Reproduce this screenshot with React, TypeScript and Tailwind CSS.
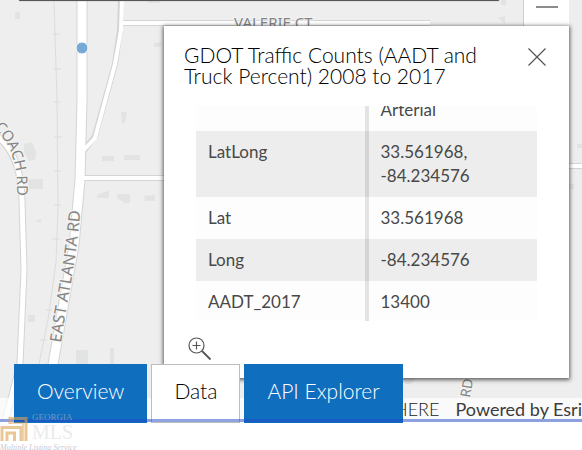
import { useState } from "react"

interface Field {
  name: string
  value: string
}

const fields: Field[] = [
  { name: "", value: "Arterial" },
  { name: "LatLong", value: "33.561968, -84.234576" },
  { name: "Lat", value: "33.561968" },
  { name: "Long", value: "-84.234576" },
  { name: "AADT_2017", value: "13400" },
]

const tabs = ["Overview", "Data", "API Explorer"]

function BaseMap() {
  return (
    <svg
      className="block h-full w-full"
      viewBox="0 0 582 422"
      preserveAspectRatio="xMinYMin slice"
      aria-label="Map"
    >
      <defs>
        <path id="coach" d="M-24 114 C-4 124 11 145 15 166 C17 176 17 186 17 196" />
        <path id="atlanta" d="M61 343 C67 300 78 256 82 190" />
      </defs>
      <rect width="900" height="600" fill="#eeeeee" />

      {/* buildings */}
      <g fill="#e2e3e3">
        <path d="M15 13l5-2v8h-5z" />
        <path d="M24 144l8-2 4 10-1 8-6 1-5-9z" />
        <path d="M28 179h15v10h-15z" />
        <path d="M35 221l6-2v4z" />
        <path d="M28 315h7v7h-7z" />
        <path d="M102 156h12v5h-12zM124 155h16v5h-16z" />
        <path d="M97 195l12-5v8h-12zM117 194h13v9h-5l-8-5zM144 196l11-1v6h-10z" />
        <path d="M121 112h6l-2 11h-3z" />
        <path d="M154 43l7-1v5h-7z" />
        <path d="M76 350h12v14h-12zM110 348h4v16h-4z" />
        <path d="M148 0h12v3h-12zM498 18l7-2v8zM500 0h6v5h-4z" />
        <path d="M577 144h6v4h-6zM569 184h5v5h-5zM404 378h12l-5 6h-6z" />
      </g>

      {/* parcel lines */}
      <g fill="none" stroke="#dcdcdc">
        <path d="M54 0L55 34 57 100 58 206 56 262 48 320 39 364 11 394 8 422" />
        <path d="M53 34h7M53 69h8M54 102h7M54 137h8M54 171h7M54 205h7M52 239h8M46 310h6M40 340h7" />
      </g>

      {/* roads */}
      <g fill="none" stroke="#d4d4d4">
        <path d="M-8 132C12 146 21 166 22 200L24 270 20 364 5 422" strokeWidth="7" />
        <path d="M121 0L120 30 115 64 95 136 83 152" strokeWidth="6" />
        <path d="M120 23H430M84 178H164M569 166H582" strokeWidth="6" />
        <path d="M82 0V100L80 180 74 245 52 370" strokeWidth="11" />
      </g>
      <g fill="none" stroke="#ffffff">
        <path d="M-8 132C12 146 21 166 22 200L24 270 20 364 5 422" strokeWidth="5" />
        <path d="M122 0L121 30 115 64 95 138 82 152" strokeWidth="4" />
        <path d="M120 23H430M82 178H164M569 166H582" strokeWidth="4" />
        <path d="M82 0V100L80 180 74 245 52 370" strokeWidth="9" />
      </g>

      <g className="font-['Noto_Sans',sans-serif]" fill="#848484" stroke="#f4f4f4" strokeWidth="2" paintOrder="stroke">
        <text fontSize="15">
          <textPath href="#coach" startOffset="100%" textAnchor="end">
            COACH RD
          </textPath>
        </text>
        <text fontSize="16">
          <textPath href="#atlanta">EAST ATLANTA RD</textPath>
        </text>
        <text x="234" y="28" fontSize="15">
          VALERIE CT
        </text>
        <text fontSize="14" transform="translate(470 398) rotate(-80)">
          RD
        </text>
      </g>

      <circle cx="82" cy="48" r="6" fill="#76a9d3" stroke="#ffffff" strokeWidth="1" />
    </svg>
  )
}

function CountPopup({ onClose }: { onClose: () => void }) {
  return (
    <section className="absolute top-[26px] right-[13px] bottom-11 left-[164px] flex flex-col bg-white px-5 shadow-[0_1px_4px_1px_rgba(0,0,0,0.6)]">
      <header className="flex items-start justify-between gap-8 pt-[18px]">
        <h2 className="text-[21px] leading-[21px] font-light text-black">
          GDOT Traffic Counts (AADT and Truck Percent) 2008 to 2017
        </h2>
        <button type="button" aria-label="Close" onClick={onClose} className="shrink-0 py-1 pr-[3px] text-[#555]">
          <svg width="18" height="18" viewBox="0 0 18 18" fill="none" stroke="currentColor" strokeWidth="1.2">
            <path d="M.5 .5l17 17M17.5 .5l-17 17" />
          </svg>
        </button>
      </header>

      <div className="mt-5 mr-3 ml-3 h-[215px] overflow-hidden">
        <table className="-mt-[17px] w-full table-fixed border-collapse text-[17px] leading-6 text-[#484848]">
          <tbody>
            {fields.map((field) => (
              <tr key={field.name} className="odd:bg-[#fdfdfd] even:bg-[#ededed]">
                <th scope="row" className="w-1/2 border-r-4 border-black/10 px-3 py-[9px] text-left align-top font-normal">
                  {field.name}
                </th>
                <td className="px-3 py-[9px] pr-14 align-top">{field.value}</td>
              </tr>
            ))}
          </tbody>
        </table>
      </div>

      <footer className="pt-4 pl-1">
        <button type="button" aria-label="Zoom to" className="block text-[#555]">
          <svg width="24" height="24" viewBox="0 0 24 24" fill="none" stroke="currentColor" strokeWidth="1.2">
            <circle cx="8.5" cy="8.5" r="7.5" />
            <path d="M8.5 4.500v8M4.500 8.500h8" />
            <path d="M14 14l8.500 8.500" strokeWidth="1.800" />
          </svg>
        </button>
      </footer>
    </section>
  )
}

function Watermark() {
  return (
    <div className="pointer-events-none absolute top-[412px] left-0 opacity-60">
      <div className="flex items-end gap-1">
        <svg width="28" height="26" viewBox="0 0 28 26" fill="none" stroke="#dba44f" strokeWidth="3">
          <path d="M10 8V2.500H26V25" />
          <path d="M2 25V11.500H21V25" />
          <path d="M7 25V17H14.500V25" />
          <path d="M11 7H23V25" strokeWidth="1.500" />
        </svg>
        <div className="font-['Liberation_Serif',serif]">
          <div className="text-[9px] leading-[10px] text-[#a9b4c8]">GEORGIA</div>
          <div className="text-[20px] leading-5 text-[#dcdee2]">MLS</div>
        </div>
      </div>
      <div className="pt-0.5 font-['Liberation_Serif',serif] text-[8px] leading-2 text-[#a4a6ac] italic">
        Multiple Listing Service
      </div>
    </div>
  )
}

export default function App() {
  const [showPopup, setShowPopup] = useState(true)
  const [activeTab, setActiveTab] = useState("Data")

  return (
    <main className="relative min-h-screen overflow-hidden bg-white font-['Lato',sans-serif]">
      <div className="relative h-[422px] overflow-hidden">
        <BaseMap />

        <div className="absolute top-0 right-[83px] left-[19px] h-px rounded-b bg-[#5a5557] shadow-[0_0_1px_#5a5557]" />

        <button
          type="button"
          aria-label="Zoom out"
          className="absolute top-0 right-[13px] flex h-8 w-[46px] justify-center border-l border-[#cfcfcf] bg-white pt-[6px]"
        >
          <span className="h-0.5 w-[22px] bg-[#8c8c8c]" />
        </button>

        {showPopup && <CountPopup onClose={() => setShowPopup(false)} />}

        <div className="absolute inset-x-0 bottom-0 flex h-6 justify-end gap-4 bg-white/70 text-[18px] leading-[22px] whitespace-nowrap">
          <span className="font-light text-[#222]">HERE</span>
          <span className="text-[#3c3c3c]">
            Powered by <a href="#esri">Esri</a>
          </span>
        </div>
      </div>

      <nav className="absolute top-[364px] left-[14px] flex gap-1">
        {tabs.map((tab) => (
          <button
            key={tab}
            type="button"
            onClick={() => setActiveTab(tab)}
            className={`h-[59px] border px-[22px] pb-1.5 text-[21px] font-light whitespace-nowrap ${
              tab === activeTab ? "border-[#bdbdbd] bg-white text-black" : "border-[#106ebe] bg-[#106ebe] text-white"
            }`}
          >
            {tab}
          </button>
        ))}
      </nav>

      <div className="pointer-events-none absolute inset-x-0 top-[419px] h-[3px] bg-[#2048c8]/50" />
      <Watermark />
    </main>
  )
}
